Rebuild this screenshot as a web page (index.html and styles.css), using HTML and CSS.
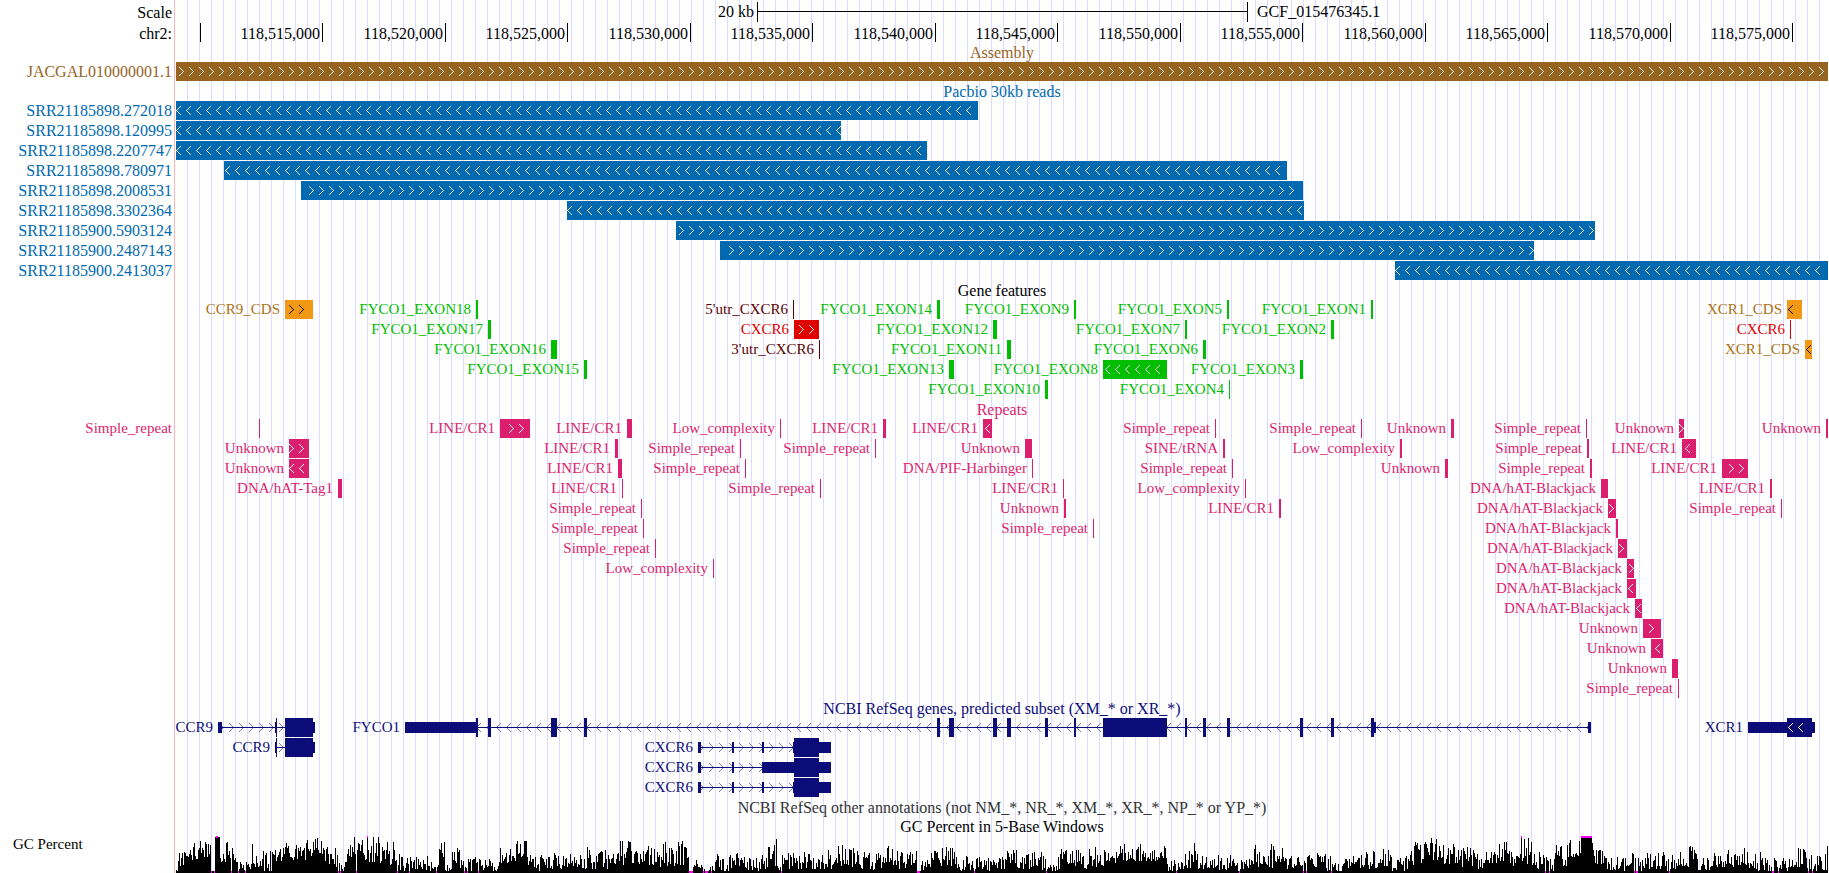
FILE: index.html
```html
<!DOCTYPE html>
<html lang="en">
<head>
<meta charset="utf-8">
<title>chr2 genome browser</title>
<link rel="stylesheet" href="styles.css">
</head>
<body>
<main class="browser" id="browser"></main>
<script src="tracks.js"></script>
</body>
</html>
```

FILE: styles.css
```css
* { box-sizing: border-box; }

body {
  margin: 0;
  background: #fff;
  color: #000;
  font-family: "Liberation Serif", "Times New Roman", serif;
  font-size: 16px;
  line-height: 19px;
}

.browser {
  padding-right: 1px;
  overflow: hidden;
}

.track { margin: 0; }

.row {
  display: grid;
  grid-template-columns: 175px minmax(0, 1fr);
  min-height: 20px;
}

.side {
  border-right: 1px solid #ffb4b4;
  padding-right: 2px;
  text-align: right;
  white-space: nowrap;
}

.lane {
  position: relative;
  margin-left: 1px;
  background: repeating-linear-gradient(to right, transparent 0 11px, #dcdcff 11px 12px);
}

.title-row { min-height: 19px; }

.title {
  margin: 0;
  font-size: 16px;
  font-weight: normal;
  text-align: center;
  white-space: nowrap;
}

.scale-row { min-height: 22px; }
.scale-row .side { padding-top: 3px; }
.ruler-row { min-height: 21px; }
.ruler-row .side { padding-top: 2px; }

.scale-bar {
  position: absolute;
  top: 2px;
  height: 20px;
  border: solid #000;
  border-width: 0 1px;
  line-height: 20px;
  white-space: nowrap;
}
.scale-bar::before {
  content: "";
  position: absolute;
  top: 9px;
  left: 0;
  right: 0;
  border-top: 1px solid #000;
}
.scale-length { position: absolute; right: 100%; padding-right: 4px; }
.scale-genome { position: absolute; left: 100%; padding-left: 10px; }

.tick {
  position: absolute;
  top: 1px;
  width: 1px;
  height: 19px;
  background: #000;
  line-height: 21px;
}
.tick-label { position: absolute; right: 100%; padding-right: 2px; }

.feature {
  position: absolute;
  top: 0;
  height: 19px;
  color: var(--ink);
}
.feature-label {
  position: absolute;
  right: 100%;
  padding-right: 5px;
  font-size: 15px;
  line-height: 19px;
  white-space: nowrap;
}
.small { font-size: 15px; }
.block {
  position: absolute;
  inset: 0;
  background: var(--fill, var(--ink));
  overflow: hidden;
}
.arrows {
  position: absolute;
  top: 5px;
  height: 9px;
  fill: none;
  stroke: var(--arrow, #fff);
  shape-rendering: crispEdges;
}

.exon {
  position: absolute;
  top: 0;
  height: 19px;
  background: #0c0c78;
}
.utr { top: 4px; height: 11px; }
.intron {
  position: absolute;
  top: 9px;
  height: 1px;
  background: #0c0c78;
}
.intron-arrows {
  position: absolute;
  top: 0;
  height: 19px;
  overflow: hidden;
  --arrow: #7878b4;
}

.brown { --ink: #96641e; color: #96641e; }
.blue { --ink: #0069af; color: #0069af; }
.green { --ink: #00be00; }
.gold { --ink: #aa7314; --fill: #f39814; --arrow: #000; }
.maroon { --ink: #5a0000; }
.red { --ink: #e10000; }
.pink { --ink: #dc1e6e; color: #dc1e6e; }
.navy { --ink: #0c0c78; color: #0c0c78; }
.gray { color: #323232; }

.wiggle-row { min-height: 37px; }
.wiggle-label {
  padding-left: 13px;
  text-align: left;
  font-size: 15px;
  line-height: 16px;
}
.wiggle {
  display: block;
  width: 100%;
  height: 37px;
  shape-rendering: crispEdges;
}
.wiggle-bars { fill: #000; }
.wiggle-clip { fill: #f0f; }
```

FILE: tracks.js
```js
// Horizontal positions are drawing units; the view spans ORIGIN..ORIGIN+SPAN.
const ORIGIN = 176;
const SPAN = 1652;
const browser = document.getElementById('browser');

const pct = n => (n / SPAN * 100) + '%';

function el(tag, cls, text) {
  const e = document.createElement(tag);
  if (cls) e.className = cls;
  if (text) e.textContent = text;
  return e;
}

function place(e, from, to) {
  e.style.left = pct(from - ORIGIN);
  if (to !== undefined) e.style.width = pct(to - from);
  return e;
}

function addRow(parent, cls, label, labelCls) {
  const row = el('div', 'row ' + (cls || ''));
  const side = el('div', 'side ' + (labelCls || ''), label);
  const lane = el('div', 'lane');
  row.append(side, lane);
  parent.append(row);
  return lane;
}

function addTrack(title, cls) {
  const track = el('section', 'track');
  if (title) addRow(track, 'title-row').append(el('h2', 'title ' + (cls || ''), title));
  browser.append(track);
  return track;
}

// Strand arrows every 10px, from the first one that fits to the last one.
function arrows(dir, first, from, to) {
  const NS = 'http://www.w3.org/2000/svg';
  const svg = document.createElementNS(NS, 'svg');
  const path = document.createElementNS(NS, 'path');
  let d = '';
  let end = 0;
  for (let x = first; x + 5 <= to; x += 10) {
    const o = x - first;
    d += dir === '>'
      ? `M${o} 0l4.5 4.5L${o} 9`
      : `M${o + 5} 0l-4.5 4.5L${o + 5} 9`;
    end = o + 5;
  }
  path.setAttribute('d', d);
  svg.setAttribute('class', 'arrows');
  svg.setAttribute('width', end);
  svg.setAttribute('height', 9);
  svg.style.left = (first - from) + 'px';
  svg.append(path);
  return svg;
}

function addFeature(lane, [label, from, to, color, dir, first]) {
  const f = place(el('div', 'feature ' + color), from, to);
  if (label) f.append(el('span', 'feature-label', label));
  const block = el('div', 'block');
  if (dir) block.append(arrows(dir, first, from, to));
  f.append(block);
  lane.append(f);
}

// Scale and ruler
const header = addTrack();
const scale = place(el('div', 'scale-bar'), 757, 1248);
scale.append(el('span', 'scale-length', '20 kb'), el('span', 'scale-genome', 'GCF_015476345.1'));
addRow(header, 'scale-row', 'Scale').append(scale);

const ruler = addRow(header, 'ruler-row', 'chr2:');
[200, 322, 445, 567, 690, 812, 935, 1057, 1180, 1302, 1425, 1547, 1670, 1792].forEach((x, i) => {
  const tick = place(el('div', 'tick'), x);
  if (i) tick.append(el('span', 'tick-label', (118510000 + i * 5000).toLocaleString('en-US')));
  ruler.append(tick);
});

// Assembly
const assembly = addTrack('Assembly', 'brown');
addFeature(addRow(assembly, '', 'JACGAL010000001.1', 'brown'), ['', 176, 1828, 'brown', '>', 179]);

// Long reads
const reads = addTrack('Pacbio 30kb reads', 'blue');
[
  ['SRR21185898.272018', 176, 978, '<', 176],
  ['SRR21185898.120995', 176, 841, '<', 176],
  ['SRR21185898.2207747', 176, 927, '<', 176],
  ['SRR21185898.780971', 224, 1287, '<', 225],
  ['SRR21185898.2008531', 301, 1303, '>', 309],
  ['SRR21185898.3302364', 567, 1304, '<', 567],
  ['SRR21185900.5903124', 676, 1595, '>', 679],
  ['SRR21185900.2487143', 720, 1534, '>', 729],
  ['SRR21185900.2413037', 1395, 1828, '<', 1395]
].forEach(([name, from, to, dir, first]) => {
  addFeature(addRow(reads, '', name, 'blue'), ['', from, to, 'blue', dir, first]);
});

// Gene features
const features = addTrack('Gene features');
const exon = (n, from, to, dir, first) => ['FYCO1_EXON' + n, from, to, 'green', dir, first];
[
  [
    ['CCR9_CDS', 285, 313, 'gold', '>', 289], exon(18, 476, 478),
    ["5'utr_CXCR6", 793, 794, 'maroon'], exon(14, 937, 940), exon(9, 1074, 1076),
    exon(5, 1227, 1229), exon(1, 1371, 1373), ['XCR1_CDS', 1787, 1802, 'gold', '<', 1788]
  ],
  [
    exon(17, 488, 491), ['CXCR6', 794, 819, 'red', '>', 799], exon(12, 993, 997),
    exon(7, 1185, 1187), exon(2, 1331, 1334), ['CXCR6', 1790, 1791, 'red']
  ],
  [
    exon(16, 551, 557), ["3'utr_CXCR6", 819, 820, 'maroon'], exon(11, 1007, 1011),
    exon(6, 1203, 1206), ['XCR1_CDS', 1805, 1812, 'gold', '<', 1806]
  ],
  [exon(15, 584, 587), exon(13, 949, 954), exon(8, 1103, 1167, '<', 1105), exon(3, 1300, 1303)],
  [exon(10, 1045, 1048), exon(4, 1229, 1230)]
].forEach(items => {
  const lane = addRow(features);
  items.forEach(item => addFeature(lane, item));
});

// Repeats
const SR = 'Simple_repeat', LC = 'Low_complexity', LN = 'LINE/CR1', UN = 'Unknown', BJ = 'DNA/hAT-Blackjack';
const repeats = addTrack('Repeats', 'pink');
[
  [
    ['', 259, 260], [LN, 500, 530, '>', 509], [LN, 627, 632], [LC, 780, 781], [LN, 883, 886],
    [LN, 983, 992, '<', 985], [SR, 1215, 1216], [SR, 1361, 1362], [UN, 1451, 1454],
    [SR, 1586, 1587], [UN, 1679, 1684, '>', 1679], [UN, 1826, 1828]
  ],
  [
    [UN, 289, 309, '>', 289], [LN, 615, 618], [SR, 740, 741], [SR, 875, 876], [UN, 1025, 1032],
    ['SINE/tRNA', 1223, 1225], [LC, 1400, 1402], [SR, 1587, 1589], [LN, 1682, 1696, '<', 1685]
  ],
  [
    [UN, 289, 309, '<', 289], [LN, 618, 622], [SR, 745, 746], ['DNA/PIF-Harbinger', 1032, 1033],
    [SR, 1232, 1233], [UN, 1445, 1448], [SR, 1590, 1592], [LN, 1722, 1748, '>', 1729]
  ],
  [
    ['DNA/hAT-Tag1', 338, 342], [LN, 622, 623], [SR, 820, 821], [LN, 1063, 1064],
    [LC, 1245, 1246], [BJ, 1601, 1608], [LN, 1770, 1772]
  ],
  [[SR, 641, 642], [UN, 1064, 1066], [LN, 1279, 1281], [BJ, 1608, 1616, '>', 1609], [SR, 1781, 1782]],
  [[SR, 643, 644], [SR, 1093, 1094], [BJ, 1616, 1618]],
  [[SR, 655, 656], [BJ, 1618, 1627, '>', 1619]],
  [[LC, 713, 714], [BJ, 1627, 1634, '>', 1629]],
  [[BJ, 1627, 1636, '<', 1628]],
  [[BJ, 1635, 1642, '<', 1636]],
  [[UN, 1643, 1661, '>', 1649]],
  [[UN, 1651, 1663, '<', 1655]],
  [[UN, 1672, 1678]],
  [[SR, 1678, 1679]]
].forEach((items, i) => {
  const lane = addRow(repeats, '', i ? '' : SR, 'pink small');
  items.forEach(([label, from, to, dir, first]) => addFeature(lane, [label, from, to, 'pink', dir, first]));
});

// RefSeq gene models: cds blocks are full height, utr blocks are lower
const CX_CDS = [[794, 819]];
const genes = addTrack('NCBI RefSeq genes, predicted subset (XM_* or XR_*)', 'navy');
[
  [
    { name: 'CCR9', dir: '>', first: 219, from: 218, to: 315,
      utr: [[218, 222], [275, 277], [313, 315]], cds: [[276, 277], [285, 313]] },
    { name: 'FYCO1', dir: '<', first: 476, from: 405, to: 1591,
      utr: [[405, 478], [1374, 1376], [1588, 1591]],
      cds: [[476, 478], [488, 491], [551, 557], [584, 587], [937, 940], [949, 954], [993, 997],
        [1007, 1011], [1045, 1048], [1074, 1076], [1103, 1167], [1185, 1187], [1203, 1206],
        [1227, 1230], [1300, 1303], [1331, 1334], [1371, 1374]] },
    { name: 'XCR1', dir: '<', first: 1798, from: 1748, to: 1815,
      utr: [[1748, 1815]], cds: [[1787, 1812]], over: ['<', 1788] }
  ],
  [
    { name: 'CCR9', dir: '>', first: 279, from: 275, to: 315,
      utr: [[275, 277], [313, 315]], cds: [[276, 277], [285, 313]] },
    { name: 'CXCR6', dir: '>', first: 699, from: 698, to: 831,
      utr: [[698, 701], [732, 734], [762, 764], [793, 794], [819, 831]], cds: CX_CDS }
  ],
  [
    { name: 'CXCR6', dir: '>', first: 699, from: 698, to: 831,
      utr: [[698, 701], [732, 734], [762, 794], [819, 831]], cds: CX_CDS }
  ],
  [
    { name: 'CXCR6', dir: '>', first: 699, from: 698, to: 831,
      utr: [[698, 701], [732, 734], [762, 764], [793, 794], [819, 831]], cds: CX_CDS }
  ]
].forEach(models => {
  const lane = addRow(genes);
  models.forEach(m => {
    const label = place(el('div', 'feature navy'), m.from);
    label.append(el('span', 'feature-label', m.name));
    const strand = place(el('div', 'intron-arrows'), m.from, m.to);
    strand.append(arrows(m.dir, m.first, m.from, m.to));
    lane.append(label, strand, place(el('div', 'intron'), m.from, m.to));
    m.utr.forEach(([a, b]) => lane.append(place(el('div', 'exon utr'), a, b)));
    m.cds.forEach(([a, b]) => {
      const block = place(el('div', 'exon'), a, b);
      if (m.over) block.append(arrows(m.over[0], m.over[1], a, b));
      lane.append(block);
    });
  });
});

addTrack('NCBI RefSeq other annotations (not NM_*, NR_*, XM_*, XR_*, NP_* or YP_*)', 'gray');

// GC percent: [start, low, high] ranges of bar height over the view
const gc = addTrack('GC Percent in 5-Base Windows');
const RANGES = [
  [176, 1, 20], [182, 10, 24], [187, 18, 32], [200, 22, 36], [211, 0, 2], [215, 36, 37], [220, 10, 16],
  [223, 16, 30], [231, 0, 1], [232, 15, 31], [238, 1, 14], [251, 8, 29], [260, 2, 27], [273, 15, 25],
  [283, 16, 32], [306, 24, 37], [324, 16, 27], [328, 7, 25], [338, 0, 10], [345, 15, 28], [350, 20, 36],
  [356, 0, 1], [357, 18, 37], [367, 14, 37], [390, 10, 33], [397, 0, 20], [403, 0, 15], [413, 4, 22],
  [428, 0, 10], [439, 18, 32], [445, 2, 10], [452, 12, 25], [460, 0, 14], [475, 1, 15], [487, 8, 20],
  [492, 2, 10], [499, 14, 26], [512, 16, 32], [524, 32, 33], [527, 2, 18], [535, 2, 17], [548, 5, 20],
  [567, 8, 22], [580, 5, 27], [593, 5, 22], [610, 12, 20], [618, 12, 32], [633, 12, 26], [642, 10, 26],
  [660, 8, 32], [673, 10, 32], [689, 0, 1], [693, 6, 18], [702, 0, 6], [715, 2, 18], [732, 5, 20],
  [743, 2, 17], [760, 5, 18], [767, 6, 28], [776, 34, 35], [777, 0, 6], [782, 8, 27], [788, 5, 22],
  [833, 8, 25], [838, 10, 33], [850, 5, 25], [863, 3, 22], [882, 10, 28], [897, 5, 22], [910, 5, 23],
  [917, 0, 2], [920, 2, 13], [930, 8, 30], [942, 10, 26], [957, 3, 10], [960, 1, 22], [970, 1, 15],
  [992, 8, 26], [997, 3, 18], [1007, 12, 22], [1012, 5, 25], [1037, 2, 20], [1047, 2, 10], [1058, 4, 25],
  [1070, 10, 22], [1083, 5, 25], [1104, 14, 25], [1120, 17, 28], [1167, 2, 12], [1172, 1, 12],
  [1183, 5, 22], [1194, 30, 31], [1195, 5, 22], [1210, 3, 18], [1228, 6, 22], [1233, 2, 15], [1250, 8, 28],
  [1263, 6, 28], [1285, 6, 20], [1298, 1, 15], [1308, 8, 24], [1322, 2, 20], [1333, 2, 10], [1345, 4, 20],
  [1368, 5, 22], [1379, 8, 24], [1392, 1, 15], [1402, 3, 20], [1409, 12, 31], [1424, 17, 36],
  [1439, 12, 32], [1456, 8, 26], [1476, 5, 20], [1499, 8, 33], [1509, 8, 22], [1519, 10, 37],
  [1534, 5, 22], [1542, 1, 18], [1554, 10, 28], [1567, 22, 36], [1581, 37, 37], [1592, 24, 34],
  [1594, 10, 26], [1606, 1, 18], [1619, 1, 20], [1649, 5, 20], [1666, 1, 18], [1679, 4, 20],
  [1689, 10, 28], [1697, 4, 20], [1712, 8, 22], [1726, 8, 28], [1747, 2, 22], [1764, 1, 14],
  [1789, 5, 22], [1797, 8, 24], [1806, 1, 20], [1827, 26, 27]
];
let seed = 20231;
const random = () => (seed = (seed * 16807) % 2147483647) / 2147483647;
let bars = '';
let clipped = '';
let r = 0;
for (let x = ORIGIN; x < ORIGIN + SPAN; x++) {
  while (r + 1 < RANGES.length && RANGES[r + 1][0] <= x) r++;
  const [, lo, hi] = RANGES[r];
  const steady = hi - lo < 3;
  const low = steady ? lo : lo * 0.7;
  const high = steady ? hi : hi + 1;
  const h = Math.min(37, Math.round(low + (high - low) * Math.pow(random(), 1.3)));
  const left = x - ORIGIN;
  if (h > 0) bars += `M${left} 37v${-h}h1v${h}z`;
  if (h < 2) clipped += `M${left} 35h1v2h-1z`;
  if (h > 36) clipped += `M${left} 0h1v2h-1z`;
}
addRow(gc, 'wiggle-row', 'GC Percent', 'wiggle-label').innerHTML =
  `<svg class="wiggle" viewBox="0 0 ${SPAN} 37" preserveAspectRatio="none" role="img" aria-label="GC percent">
    <path class="wiggle-bars" d="${bars}"/><path class="wiggle-clip" d="${clipped}"/></svg>`;
```
